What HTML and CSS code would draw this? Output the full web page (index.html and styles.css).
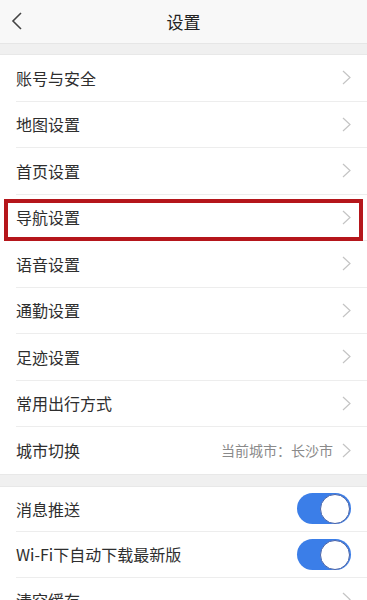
FILE: index.html
```html
<!DOCTYPE html>
<html lang="zh">
<head>
    <meta charset="UTF-8">
    <meta name="viewport" content="width=device-width, initial-scale=1.0">
    <title>设置</title>
    <link rel="stylesheet" href="styles.css">
</head>
<body>
    <div class="header">
        <span class="back">
            <svg width="12" height="18" viewBox="0 0 12 18"><polyline points="10,1 2,9 10,17" fill="none" stroke="#444" stroke-width="1.6"/></svg>
        </span>
        <h1 class="title">设置</h1>
    </div>

    <div class="gap"></div>

    <div class="list">
        <div class="row"><span class="label">账号与安全</span><span class="arrow"><svg width="9" height="15" viewBox="0 0 9 15"><polyline points="1,1 8,7.5 1,14" fill="none" stroke="#c4c4c4" stroke-width="1.2"/></svg></span></div>
        <div class="row"><span class="label">地图设置</span><span class="arrow"><svg width="9" height="15" viewBox="0 0 9 15"><polyline points="1,1 8,7.5 1,14" fill="none" stroke="#c4c4c4" stroke-width="1.2"/></svg></span></div>
        <div class="row"><span class="label">首页设置</span><span class="arrow"><svg width="9" height="15" viewBox="0 0 9 15"><polyline points="1,1 8,7.5 1,14" fill="none" stroke="#c4c4c4" stroke-width="1.2"/></svg></span></div>
        <div class="row row-marked"><span class="label">导航设置</span><span class="arrow"><svg width="9" height="15" viewBox="0 0 9 15"><polyline points="1,1 8,7.5 1,14" fill="none" stroke="#c4c4c4" stroke-width="1.2"/></svg></span></div>
        <div class="row"><span class="label">语音设置</span><span class="arrow"><svg width="9" height="15" viewBox="0 0 9 15"><polyline points="1,1 8,7.5 1,14" fill="none" stroke="#c4c4c4" stroke-width="1.2"/></svg></span></div>
        <div class="row"><span class="label">通勤设置</span><span class="arrow"><svg width="9" height="15" viewBox="0 0 9 15"><polyline points="1,1 8,7.5 1,14" fill="none" stroke="#c4c4c4" stroke-width="1.2"/></svg></span></div>
        <div class="row"><span class="label">足迹设置</span><span class="arrow"><svg width="9" height="15" viewBox="0 0 9 15"><polyline points="1,1 8,7.5 1,14" fill="none" stroke="#c4c4c4" stroke-width="1.2"/></svg></span></div>
        <div class="row"><span class="label">常用出行方式</span><span class="arrow"><svg width="9" height="15" viewBox="0 0 9 15"><polyline points="1,1 8,7.5 1,14" fill="none" stroke="#c4c4c4" stroke-width="1.2"/></svg></span></div>
        <div class="row row-last"><span class="label">城市切换</span><span class="value">当前城市：长沙市</span><span class="arrow"><svg width="9" height="15" viewBox="0 0 9 15"><polyline points="1,1 8,7.5 1,14" fill="none" stroke="#c4c4c4" stroke-width="1.2"/></svg></span></div>
    </div>

    <div class="gap gap-small"></div>

    <div class="list list-second">
        <div class="row"><span class="label">消息推送</span><span class="switch"><span class="knob"></span></span></div>
        <div class="row"><span class="label">Wi-Fi下自动下载最新版</span><span class="switch"><span class="knob"></span></span></div>
        <div class="row"><span class="label">清空缓存</span><span class="arrow"><svg width="9" height="15" viewBox="0 0 9 15"><polyline points="1,1 8,7.5 1,14" fill="none" stroke="#c4c4c4" stroke-width="1.2"/></svg></span></div>
    </div>
</body>
</html>
```

FILE: styles.css
```css
body {
    margin: 0;
    background-color: #f0f0f0;
    font-family: "Noto Sans CJK SC", "Noto Sans", sans-serif;
    color: #333;
    overflow: hidden;
}
.header {
    height: 43px;
    background-color: #f8f8f8;
    border-bottom: 1px solid #e6e6e6;
    display: flex;
    align-items: center;
    justify-content: center;
    position: relative;
}
.back {
    position: absolute;
    left: 11px;
    top: 11px;
}
.title {
    margin: 0;
    font-size: 17px;
    font-weight: normal;
    color: #222;
}
.gap {
    height: 10px;
    background-color: #f0f0f0;
    border-bottom: 1px solid #e8e8e8;
}
.gap-small {
    height: 11px;
    border-top: 1px solid #e8e8e8;
}
.list {
    background-color: white;
}
.row {
    height: 46.5px;
    margin-left: 16px;
    padding-right: 16px;
    display: flex;
    align-items: center;
    border-bottom: 1px solid #ededed;
    box-sizing: border-box;
    position: relative;
}
.list-second .row {
    height: 45.5px;
}
.row-last {
    border-bottom: none;
}
.label {
    flex: 1;
    font-size: 16px;
    color: #2e2e2e;
}
.value {
    font-size: 14px;
    color: #8a8a8a;
    margin-right: 9px;
}
.arrow {
    display: flex;
    align-items: center;
}
.row-marked::after {
    content: "";
    position: absolute;
    left: -12px;
    right: 4px;
    top: 4px;
    bottom: -1px;
    border: 4px solid #b5161b;
}
.switch {
    width: 54px;
    height: 31px;
    border-radius: 16px;
    background-color: #3b7ee8;
    position: relative;
}
.knob {
    position: absolute;
    right: 1px;
    top: 1px;
    width: 28px;
    height: 28px;
    border-radius: 50%;
    background-color: white;
    border: 0.5px solid #4a64a8;
}
```
